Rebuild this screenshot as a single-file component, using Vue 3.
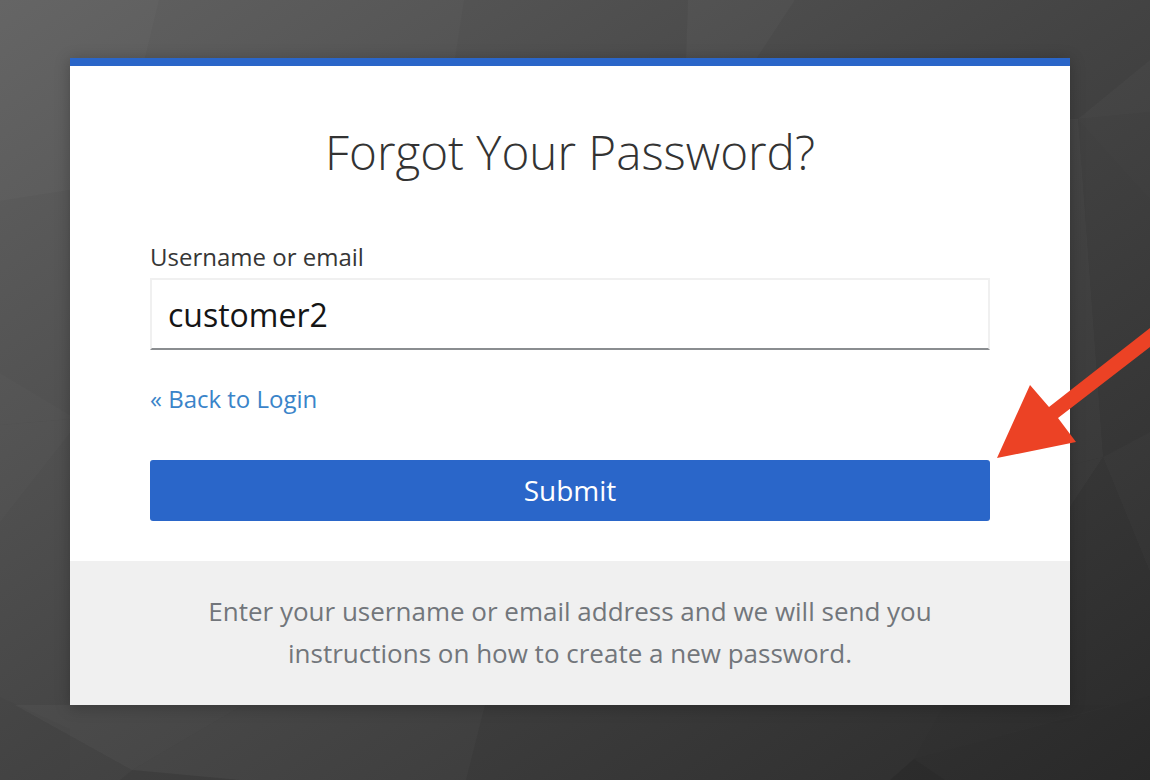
<script setup>
const polys = [
  { points: '0,0 159,0 145,58 127,130 70,190 0,201', fill: '#fff', opacity: 0.02 },
  { points: '464,0 688,0 686,58 455,58', fill: '#000', opacity: 0.03 },
  { points: '688,0 795,0 757,58 686,58', fill: '#fff', opacity: 0.012 },
  { points: '795,0 1005,0 1041,58 757,58', fill: '#000', opacity: 0.025 },
  { points: '1005,0 1150,0 1150,60 1078,119 1070,119 1070,58 1041,58', fill: '#000', opacity: 0.02 },
  { points: '1078,119 1150,60 1150,112', fill: '#fff', opacity: 0.01 },
  { points: '1078,119 1150,112 1150,199', fill: '#fff', opacity: 0.005 },
  { points: '1070,119 1078,119 1103,457 1070,465', fill: '#fff', opacity: 0.018 },
  { points: '1078,119 1150,199 1150,432 1103,457', fill: '#000', opacity: 0.006 },
  { points: '1070,465 1103,457 1070,507', fill: '#fff', opacity: 0.015 },
  { points: '1103,457 1150,432 1150,572', fill: '#fff', opacity: 0.01 },
  { points: '1070,507 1103,457 1150,572 1150,696 1070,716', fill: '#000', opacity: 0.012 },
  { points: '0,373 70,415 70,419 0,425', fill: '#fff', opacity: 0.012 },
  { points: '0,425 70,419 70,433 0,522', fill: '#fff', opacity: 0.012 },
  { points: '0,697 70,729 70,780 0,780', fill: '#000', opacity: 0.025 },
  { points: '15,705 243,705 132,770', fill: '#fff', opacity: 0.03 },
  { points: '132,770 120,780 240,780', fill: '#000', opacity: 0.05 },
  { points: '243,705 485,705 466,780 240,780 132,770', fill: '#fff', opacity: 0.025 },
  { points: '485,705 661,705 640,780 466,780', fill: '#fff', opacity: 0.005 },
  { points: '661,705 944,705 914,759 825,780 640,780', fill: '#fff', opacity: 0.005 },
  { points: '944,705 1110,705 914,759', fill: '#000', opacity: 0.015 },
  { points: '914,759 1150,696 1150,780 890,780', fill: '#000', opacity: 0.04 },
  { points: '914,759 890,780 945,780', fill: '#000', opacity: 0.05 }
]
</script>

<template>
  <div class="page">
    <svg class="backdrop" viewBox="0 0 1150 780" aria-hidden="true">
      <polygon v-for="(p, i) in polys" :key="i" :points="p.points" :fill="p.fill" :fill-opacity="p.opacity" />
    </svg>

    <main class="card">
      <h1 class="title">Forgot Your Password?</h1>
      <form class="form" @submit.prevent>
        <label class="label" for="username">Username or email</label>
        <input id="username" class="input" type="text" value="customer2" />
        <a class="back" href="#">« Back to Login</a>
        <button class="submit" type="submit">Submit</button>
      </form>
      <footer class="info">
        Enter your username or email address and we will send you<br />
        instructions on how to create a new password.
      </footer>
    </main>

    <svg class="arrow" viewBox="0 0 1150 780" aria-hidden="true">
      <polygon points="997,458 1030,385 1049,407 1150,328 1150,347 1058,418 1076,442" fill="#ec4225" />
    </svg>
  </div>
</template>

<style>
html, body { margin: 0; padding: 0; }
</style>

<style scoped>
.page {
  position: relative;
  width: 1150px;
  height: 780px;
  overflow: hidden;
  padding-top: 58px;
  box-sizing: border-box;
  background: linear-gradient(to bottom right, #626262, #454545 50%, #2b2b2b);
  font-family: "Open Sans", sans-serif;
}
.backdrop, .arrow {
  position: absolute;
  left: 0;
  top: 0;
  width: 1150px;
  height: 780px;
}
.card {
  position: relative;
  width: 1000px;
  margin-left: 70px;
  box-sizing: border-box;
  background: #fff;
  border-top: 8px solid #2a66c9;
  box-shadow: 0 2px 14px rgba(0, 0, 0, 0.25);
}
.title {
  margin: 0;
  padding-top: 55px;
  text-align: center;
  font-size: 47.6px;
  line-height: 62px;
  font-weight: 300;
  color: #333;
}
.form {
  display: flex;
  flex-direction: column;
  padding: 58px 80px 40px;
}
.label {
  font-size: 24px;
  line-height: 32px;
  color: #363636;
  margin-bottom: 5px;
}
.input {
  height: 72px;
  box-sizing: border-box;
  padding: 0 16px;
  border: 2px solid #f0f0f0;
  border-bottom-color: #8a8d90;
  outline: none;
  background: #fff;
  font-family: inherit;
  font-size: 32px;
  color: #151515;
}
.back {
  margin-top: 32px;
  font-size: 24px;
  line-height: 34px;
  color: #3a84c9;
  text-decoration: none;
}
.submit {
  margin-top: 44px;
  height: 61px;
  padding: 0 0 2px;
  border: none;
  border-radius: 3px;
  background: #2a66c9;
  color: #fff;
  font-family: inherit;
  font-size: 28px;
}
.info {
  background: #f0f0f0;
  padding: 30px 0 31px;
  text-align: center;
  font-size: 26px;
  line-height: 41.5px;
  color: #72767b;
}
</style>
